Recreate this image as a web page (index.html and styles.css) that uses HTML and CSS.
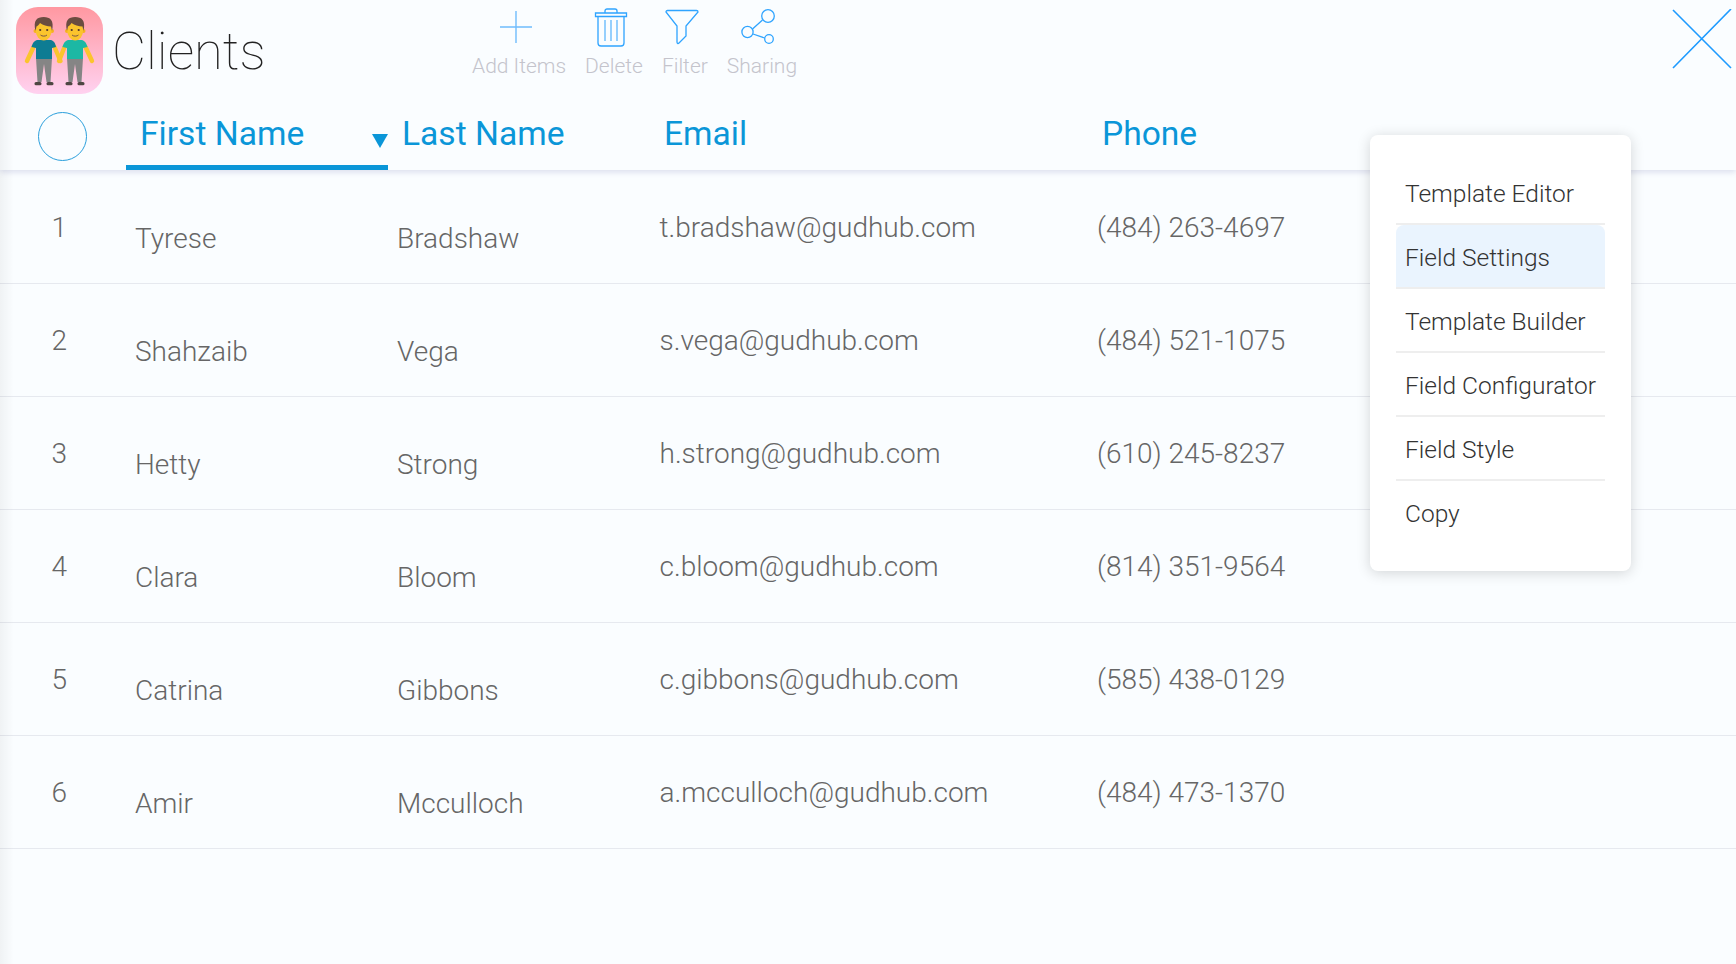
FILE: index.html
```html
<!DOCTYPE html>
<html lang="en">
  <head>
    <meta charset="UTF-8" />
    <meta name="viewport" content="width=device-width, initial-scale=1.0" />
    <title>Clients</title>
    <link rel="stylesheet" href="styles.css">
  </head>
  <body>
    <div class="page">
      <header class="header">
        <div class="top-bar">
          <svg class="logo" viewBox="0 0 87 87">
            <defs>
              <linearGradient id="logo-bg" x1="0" y1="0" x2="0" y2="1">
                <stop offset="0" stop-color="#ff98a1" />
                <stop offset="1" stop-color="#ffd2f0" />
              </linearGradient>
            </defs>
            <rect width="87" height="87" rx="22" fill="url(#logo-bg)" />
            <g id="man-left">
              <path d="M17.5 40 L11 54" stroke="#fbc42d" stroke-width="4.4" stroke-linecap="round" />
              <path d="M38.5 40 L44.5 54" stroke="#fbc42d" stroke-width="4.4" stroke-linecap="round" />
              <path d="M20 51 H36 L34.5 75 H30.5 L28 57 L25.5 75 H21.5 Z" fill="#858585" />
              <rect x="18.5" y="75" width="7" height="3.2" rx="1.5" fill="#4e4642" />
              <rect x="30.5" y="75" width="7" height="3.2" rx="1.5" fill="#4e4642" />
              <path d="M22 33 H34 C37 33 39 35 40 40 L36 41 V52 H20 V41 L15.500 40 C17 35 19 33 22 33 Z" fill="#0e7c93" />
              <circle cx="19.500" cy="24" r="2" fill="#f5b21f" />
              <circle cx="36" cy="24" r="2" fill="#f5b21f" />
              <ellipse cx="27.700" cy="23" rx="8" ry="10.500" fill="#fbc42d" />
              <path d="M19.500 24 C17 13 21 10 27.700 10 C34 10 38.500 13 36 24 L35 19.500 C31 19.500 27 18 24 16 C23 18 21.500 19 20.500 19.500 Z" fill="#6b4c40" />
              <circle cx="24.200" cy="23" r="1.100" fill="#4e342e" />
              <circle cx="31.200" cy="23" r="1.100" fill="#4e342e" />
              <path d="M24.500 28 C26 29.500 29.500 29.500 31 28" stroke="#795548" stroke-width="1" fill="none" />
            </g>
            <g id="man-right">
              <path d="M48.500 40 L43 54" stroke="#fbc42d" stroke-width="4.400" stroke-linecap="round" />
              <path d="M69.500 40 L76 54" stroke="#fbc42d" stroke-width="4.400" stroke-linecap="round" />
              <path d="M51 51 H67 L65.500 75 H61.500 L59 57 L56.500 75 H52.500 Z" fill="#858585" />
              <rect x="49.500" y="75" width="7" height="3.200" rx="1.500" fill="#4e4642" />
              <rect x="61.500" y="75" width="7" height="3.200" rx="1.500" fill="#4e4642" />
              <path d="M53 33 H65 C68 33 70 35 71.500 40 L67 41 V52 H51 V41 L46.500 40 C48 35 50 33 53 33 Z" fill="#1cb8a4" />
              <circle cx="51" cy="24" r="2" fill="#f5b21f" />
              <circle cx="67.500" cy="24" r="2" fill="#f5b21f" />
              <ellipse cx="59.200" cy="23" rx="8" ry="10.500" fill="#fbc42d" />
              <path d="M51 24 C48.500 13 52.500 10 59.200 10 C65.500 10 70 13 67.500 24 L66.500 19.500 C62.500 19.500 58.500 18 55.500 16 C54.500 18 53 19 52 19.500 Z" fill="#6b4c40" />
              <circle cx="55.700" cy="23" r="1.100" fill="#4e342e" />
              <circle cx="62.700" cy="23" r="1.100" fill="#4e342e" />
              <path d="M56 28 C57.500 29.500 61 29.500 62.500 28" stroke="#795548" stroke-width="1" fill="none" />
            </g>
          </svg>
          <h1 class="title">Clients</h1>
          <nav class="toolbar">
            <div class="tool">
              <svg class="tool-icon" viewBox="0 0 36 40">
                <path d="M18 4 V36 M2 20 H34" stroke="#6fbcfd" stroke-width="1.4" fill="none" />
              </svg>
              <span>Add Items</span>
            </div>
            <div class="tool">
              <svg class="tool-icon" viewBox="0 0 36 40">
                <path d="M12 6 V4 C12 2.5 13 2 14 2 H22 C23 2 24 2.5 24 4 V6" stroke="#2fa4ff" stroke-width="1.3" fill="none" />
                <path d="M2.5 6 H33.5 V9.5 H2.5 Z" stroke="#2fa4ff" stroke-width="1.3" fill="none" />
                <path d="M5 10 V36 C5 38 6 39 8 39 H28 C30 39 31 38 31 36 V10" stroke="#2fa4ff" stroke-width="1.3" fill="none" />
                <path d="M12 13 V34 M18 13 V34 M24 13 V34" stroke="#7cc4fd" stroke-width="1.6" fill="none" />
              </svg>
              <span>Delete</span>
            </div>
            <div class="tool">
              <svg class="tool-icon" viewBox="0 0 36 40">
                <path d="M2 5 C2 4 2.5 3.5 3.5 3.5 H32.5 C33.5 3.5 34 4 34 5 L22 19 V29 L15 36 C14 37 13 36.5 13 35 V19 Z" stroke="#2fa4ff" stroke-width="1.3" fill="none" />
              </svg>
              <span>Filter</span>
            </div>
            <div class="tool">
              <svg class="tool-icon" viewBox="0 0 36 40">
                <circle cx="27" cy="9" r="6.3" stroke="#2fa4ff" stroke-width="1.3" fill="none" />
                <circle cx="6.5" cy="25" r="5.6" stroke="#2fa4ff" stroke-width="1.3" fill="none" />
                <circle cx="28" cy="32" r="4.3" stroke="#2fa4ff" stroke-width="1.3" fill="none" />
                <path d="M11.5 22 L21.5 13 M12 27 L23.7 31" stroke="#2fa4ff" stroke-width="1.3" fill="none" />
              </svg>
              <span>Sharing</span>
            </div>
          </nav>
          <svg class="close-icon" viewBox="0 0 60 60">
            <path d="M1 1 L59 59 M59 0 L1 59" stroke="#1e9bff" stroke-width="1.6" fill="none" />
          </svg>
        </div>
        <div class="columns">
          <div class="select-cell"><span class="select-all"></span></div>
          <div class="col-head col-active">First Name<span class="sort-arrow"></span></div>
          <div class="col-head">Last Name</div>
          <div class="col-head">Email</div>
          <div class="col-head col-phone">Phone</div>
        </div>
      </header>

      <main class="rows">
        <div class="row">
          <div class="cell cell-num">1</div>
          <div class="cell cell-name">Tyrese</div>
          <div class="cell cell-name">Bradshaw</div>
          <div class="cell">t.bradshaw@gudhub.com</div>
          <div class="cell cell-phone">(484) 263-4697</div>
        </div>
        <div class="row">
          <div class="cell cell-num">2</div>
          <div class="cell cell-name">Shahzaib</div>
          <div class="cell cell-name">Vega</div>
          <div class="cell">s.vega@gudhub.com</div>
          <div class="cell cell-phone">(484) 521-1075</div>
        </div>
        <div class="row">
          <div class="cell cell-num">3</div>
          <div class="cell cell-name">Hetty</div>
          <div class="cell cell-name">Strong</div>
          <div class="cell">h.strong@gudhub.com</div>
          <div class="cell cell-phone">(610) 245-8237</div>
        </div>
        <div class="row">
          <div class="cell cell-num">4</div>
          <div class="cell cell-name">Clara</div>
          <div class="cell cell-name">Bloom</div>
          <div class="cell">c.bloom@gudhub.com</div>
          <div class="cell cell-phone">(814) 351-9564</div>
        </div>
        <div class="row">
          <div class="cell cell-num">5</div>
          <div class="cell cell-name">Catrina</div>
          <div class="cell cell-name">Gibbons</div>
          <div class="cell">c.gibbons@gudhub.com</div>
          <div class="cell cell-phone">(585) 438-0129</div>
        </div>
        <div class="row">
          <div class="cell cell-num">6</div>
          <div class="cell cell-name">Amir</div>
          <div class="cell cell-name">Mcculloch</div>
          <div class="cell">a.mcculloch@gudhub.com</div>
          <div class="cell cell-phone">(484) 473-1370</div>
        </div>
      </main>

      <ul class="menu">
        <li>Template Editor</li>
        <li class="menu-active">Field Settings</li>
        <li>Template Builder</li>
        <li>Field Configurator</li>
        <li>Field Style</li>
        <li>Copy</li>
      </ul>
    </div>
  </body>
</html>
```

FILE: styles.css
```css
body {
  font-family: Roboto, "Liberation Sans", sans-serif;
  margin: 0;
  padding: 0;
  background-color: #fafdff;
  overflow: hidden;
}
.page {
  position: relative;
  height: 964px;
}
.page::after {
  content: "";
  position: absolute;
  top: 0;
  left: 0;
  bottom: 0;
  width: 14px;
  background: linear-gradient(to right, rgba(0, 0, 0, 0.045), rgba(0, 0, 0, 0));
}
.header {
  position: relative;
  height: 170px;
  box-sizing: border-box;
  background-color: #fafdff;
  box-shadow: 0 2px 6px rgba(90, 90, 160, 0.2);
}
.top-bar {
  display: flex;
  align-items: flex-start;
  height: 100px;
  padding: 7px 4px 0 16px;
  box-sizing: border-box;
}
.logo {
  width: 87px;
  height: 87px;
  flex: none;
}
.title {
  margin: 9px 0 0 9px;
  width: 360px;
  font-size: 52.5px;
  line-height: 70px;
  font-weight: 100;
  color: #222;
}
.toolbar {
  display: flex;
  gap: 19px;
}
.tool {
  display: flex;
  flex-direction: column;
  align-items: center;
  font-size: 21px;
  line-height: 26px;
  font-weight: 300;
  color: #c4c4cc;
}
.tool-icon {
  width: 36px;
  height: 40px;
  margin: 0 6px 6px 0;
}
.close-icon {
  width: 60px;
  height: 60px;
  margin: 2px 0 0 auto;
}
.columns {
  display: grid;
  grid-template-columns: 126px 262px 262px 437px 1fr;
  height: 70px;
}
.select-cell {
  padding: 12px 0 0 38px;
}
.select-all {
  display: block;
  width: 49px;
  height: 49px;
  box-sizing: border-box;
  border: 1px solid #2a9fdc;
  border-radius: 50%;
}
.col-head {
  display: flex;
  justify-content: space-between;
  padding: 14px 0 0 14px;
  font-size: 33.6px;
  line-height: 40px;
  color: #0a96d8;
}
.col-phone {
  padding-left: 15px;
}
.col-active {
  border-bottom: 5px solid #0a96d8;
}
.sort-arrow {
  width: 0;
  height: 0;
  margin-top: 20px;
  border-left: 8px solid transparent;
  border-right: 8px solid transparent;
  border-top: 14px solid #0a96d8;
}
.rows {
  padding-top: 1px;
}
.row {
  display: grid;
  grid-template-columns: 126px 262px 262px 437px 1fr;
  height: 113px;
  box-sizing: border-box;
  padding-top: 37px;
  border-bottom: 1px solid #e6e9ef;
}
.cell {
  padding-left: 9.5px;
  font-size: 28px;
  line-height: 40px;
  font-weight: 300;
  color: #666;
}
.cell-num {
  padding-left: 51.5px;
}
.cell-name {
  padding-top: 10.5px;
  padding-left: 9px;
}
.cell-phone {
  padding-left: 10px;
}
.menu {
  position: absolute;
  top: 135px;
  left: 1370px;
  width: 261px;
  margin: 0;
  padding: 26px;
  box-sizing: border-box;
  list-style: none;
  background-color: #fff;
  border-radius: 8px;
  box-shadow: 0 2px 14px rgba(0, 0, 0, 0.16);
}
.menu li {
  height: 64px;
  box-sizing: border-box;
  padding: 3px 0 0 9px;
  font-size: 24.5px;
  line-height: 60px;
  font-weight: 300;
  color: #333;
  white-space: nowrap;
  border-bottom: 2px solid #eee;
}
.menu li:last-child {
  border-bottom: none;
}
.menu .menu-active {
  background-color: #eaf4fe;
  border-radius: 8px 8px 0 0;
}
```
